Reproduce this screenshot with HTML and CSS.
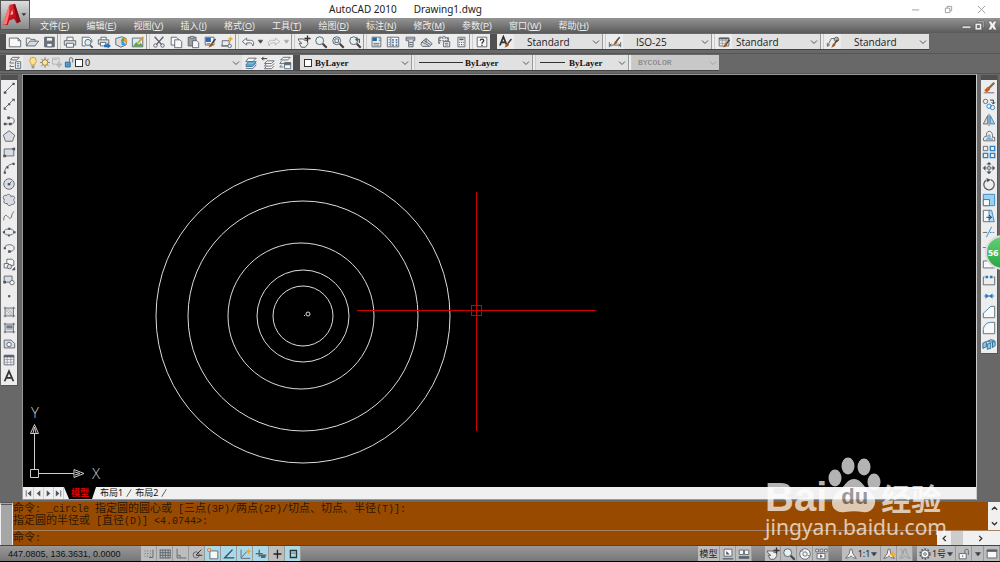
FILE: index.html
```html
<!DOCTYPE html>
<html lang="zh-CN">
<head>
<meta charset="utf-8">
<title>AutoCAD 2010 Drawing1.dwg</title>
<link rel="stylesheet" href="styles.css">
</head>
<body>
<svg class="defs" aria-hidden="true">
  <defs>
    <linearGradient id="red" x1="0" y1="0" x2="1" y2="1"><stop offset="0" stop-color="#f04a4a"/><stop offset=".5" stop-color="#cf1420"/><stop offset="1" stop-color="#7c0a10"/></linearGradient>
    <symbol id="chev" viewBox="0 0 8 8"><path d="M1 2.500 4 5.500 7 2.500" fill="none" stroke="#555"/></symbol>
    <symbol id="tri" viewBox="0 0 8 8"><path d="M1.500 2.500h5L4 6z" fill="#333"/></symbol>
    <symbol id="brush" viewBox="0 0 16 16"><path d="M14 3 9.500 8.500" stroke="#3c4048" stroke-width="2" fill="none"/><path d="M10.500 8c1 2 0 5-6 6 2-1 1.500-5 4-6z" fill="#a55a22" stroke="none"/></symbol>
    <symbol id="mag" viewBox="0 0 16 16"><circle cx="6.500" cy="6.500" r="4.500" fill="#e4f0f2" stroke="#4c5a5e"/><path d="M10 10l4.500 4.500" stroke="#444" stroke-width="2.500"/></symbol>
    <symbol id="hand" viewBox="0 0 16 16"><path d="M1.500 4.500h6l1 1.500h3l1 4-3 4H5L2.500 9.500h3L2 6.500z" fill="#eee" stroke="#555"/><path d="M12 .5v7M8.500 4h7" stroke="#333" stroke-width="1.500"/></symbol>
  </defs>
</svg>

<header class="top">
  <div class="title">
    <span class="name">AutoCAD 2010</span><span class="doc">Drawing1.dwg</span>
    <div class="win">
      <button aria-label="最小化"><svg viewBox="0 0 10 10"><path d="M1 5.500h8"/></svg></button>
      <button aria-label="还原"><svg viewBox="0 0 10 10"><path d="M1.500 3.500h5v5h-5zM3.500 3.500v-2h5v5h-2"/></svg></button>
      <button aria-label="关闭"><svg viewBox="0 0 10 10"><path d="M1 1l8 8M9 1 1 9"/></svg></button>
    </div>
  </div>
  <nav class="menu">
    <button>文件(<u>F</u>)</button><button>编辑(<u>E</u>)</button><button>视图(<u>V</u>)</button><button>插入(<u>I</u>)</button><button>格式(<u>O</u>)</button><button>工具(<u>T</u>)</button><button>绘图(<u>D</u>)</button><button>标注(<u>N</u>)</button><button>修改(<u>M</u>)</button><button>参数(<u>P</u>)</button><button>窗口(<u>W</u>)</button><button>帮助(<u>H</u>)</button>
    <div class="mdi">
      <button aria-label="最小化图形"><svg viewBox="0 0 10 10"><path d="M1 5.500h8v2H1z"/></svg></button>
      <button aria-label="还原图形"><svg viewBox="0 0 10 10"><path d="M3 1h6v6H8V2H3zM1 3h6v6H1zm2 2v2h2V5z" fill-rule="evenodd"/></svg></button>
      <button aria-label="关闭图形"><svg viewBox="0 0 10 10"><path d="M1 1h3l1 2 1-2h3L7 5l2 4H6L5 7 4 9H1l2-4z"/></svg></button>
    </div>
  </nav>
  <button class="app" aria-label="应用程序菜单">
    <svg viewBox="0 0 30 30"><path d="M2 25 9 4l6-1 6 19-4 2-3-5-5 2-2 5z" fill="url(#red)"/><path d="M10 15l3-1-1-5z" fill="#f2c0c0"/><path d="M2 25 9 4v9L6 25z" fill="#ff7670"/><path d="M15 3l6 19-3 1-5-19z" fill="#8b0c14"/><path d="M22 13h5l-2.500 3z" fill="#333"/></svg>
  </button>
</header>

<div class="row">
  <div class="bar">
    <button aria-label="新建"><svg viewBox="0 0 16 16"><path d="M1.500 3.500h10l3 3v7h-13z" class="w"/><path d="M11.500 3.500v3h3"/></svg></button>
    <button aria-label="打开"><svg viewBox="0 0 16 16"><path d="M1.500 12.500v-9h4l1 1.500h5v2"/><path d="M1.500 12.500l4-5.500h10l-4 5.500z" class="g"/></svg></button>
    <button aria-label="保存"><svg viewBox="0 0 16 16"><path d="M3 2.500h11v11H3z" fill="#69727e"/><path d="M5 3h7v4H5zM5.500 9.500h6v4h-6z" class="w"/></svg></button>
    <i class="sep"></i>
    <button aria-label="打印"><svg viewBox="0 0 16 16"><path d="M4.500 6V2.500h7V6" class="w"/><path d="M1.500 6.500h13v5h-13z" class="g"/><path d="M4 9.500h8v4.500H4z" class="w"/></svg></button>
    <button aria-label="打印预览"><svg viewBox="0 0 16 16"><path d="M2.500 12.500v-10h8l3 3v3M2.500 12.500h4" class="w"/><circle cx="9" cy="8.500" r="3.500" fill="#d6edf3"/><path d="M11.500 11.500l3 3" stroke-width="2"/></svg></button>
    <button aria-label="发布"><svg viewBox="0 0 16 16"><path d="M4.500 5V2.500h6V5" class="w"/><path d="M1.500 5.500h12v5h-12z" class="g"/><path d="M4 8.500h6v4H4z" class="w"/><path d="M8 11h4V9l4 3.500-4 3V14H8z" fill="#1e72c4" stroke="none"/></svg></button>
    <button aria-label="三维DWF"><svg viewBox="0 0 16 16"><path d="M2 4l7-2 5 2v7l-6 3-6-3z" class="g"/><path d="M8 7a4 4 0 0 1 4-4v4z" fill="#50a84a" stroke="none"/><path d="M12 3a4 4 0 0 1 2.500 6L11 7z" fill="#f29d34" stroke="none"/><path d="M8 7h3l2 4-4 1z" fill="#4098dd" stroke="none"/></svg></button>
    <button aria-label="渲染"><svg viewBox="0 0 16 16"><path d="M1.500 3.500h12v10h-12z" fill="#d7ebf7"/><path d="M2 13l4-5 3 3 2-2 2.500 3v1z" fill="#63a24c" stroke="none"/><path d="M8 9l6-7" stroke="#d99b2b" stroke-width="2"/></svg></button>
    <i class="sep"></i>
    <button aria-label="剪切"><svg viewBox="0 0 16 16"><path d="M3 2l8 9M13 2l-8 9" stroke-width="1.500"/><circle cx="4" cy="12" r="2"/><circle cx="12" cy="12" r="2"/></svg></button>
    <button aria-label="复制"><svg viewBox="0 0 16 16"><path d="M2.500 11.500v-9h6l2 2v7z" class="w"/><path d="M6.500 14.500v-9h6l2 2v7z" class="w"/></svg></button>
    <button aria-label="粘贴"><svg viewBox="0 0 16 16"><path d="M2.500 2.500h9v10h-9z" fill="#9b9b98"/><path d="M5 1.500h4v2H5z" class="w"/><path d="M7.500 14.500v-8h5l2 2v6z" class="w"/></svg></button>
    <button aria-label="特性匹配"><svg viewBox="0 0 16 16"><path d="M2.500 2.500h10v9h-10z" class="w"/><path d="M3 3h6v5H3z" fill="#2c6bb0" stroke="none"/><path d="M4 10h4"/><use href="#brush" x="2" y="2" width="14" height="14"/></svg></button>
    <button aria-label="块编辑器"><svg viewBox="0 0 16 16"><path d="M2.500 12.500v-6h8v6zM1 12.500h12"/><circle cx="11" cy="12.500" r="2" class="w"/><path d="M12 1l1 2.500 2.500 1L13 5.500 12 8l-1-2.500L8.500 4.500l2.500-1z" fill="#efa632" stroke="none"/></svg></button>
    <i class="sep"></i>
    <button aria-label="放弃"><svg viewBox="0 0 16 16"><path d="M1.500 7.500l5-4V6h4c4 0 5 3 3 6.500C13 10 12 9 10.500 9h-4v2.500z" class="w"/></svg></button><button class="dd" aria-label="放弃列表"><svg viewBox="0 0 8 8"><use href="#tri"/></svg></button>
    <button aria-label="重做"><svg viewBox="0 0 16 16" class="off"><path d="M14.500 7.500l-5-4V6h-4c-4 0-5 3-3 6.500C3 10 4 9 5.500 9h4v2.500z"/></svg></button><button class="dd off" aria-label="重做列表"><svg viewBox="0 0 8 8"><use href="#tri"/></svg></button>
    <i class="sep"></i>
    <button aria-label="平移"><svg viewBox="0 0 16 16"><use href="#hand"/></svg></button>
    <button aria-label="缩放"><svg viewBox="0 0 16 16"><use href="#mag"/></svg></button>
    <button aria-label="窗口缩放"><svg viewBox="0 0 16 16"><use href="#mag"/><path d="M4.500 4.500h4v4h-4z"/></svg></button>
    <button aria-label="上一个缩放"><svg viewBox="0 0 16 16"><use href="#mag"/><path d="M13 9V5H9M11 3L9 5l2 2" stroke-width="1.500"/></svg></button>
    <i class="sep"></i>
    <button aria-label="特性"><svg viewBox="0 0 16 16"><path d="M3.500 2.500h10v11h-10z" class="w"/><path d="M4 3h5v4H4z" fill="#2567a8" stroke="none"/><path d="M11 4.500h2M11 6.500h2M5 9.500h7M5 11.500h7"/></svg></button>
    <button aria-label="设计中心"><svg viewBox="0 0 16 16"><path d="M1.500 2.500h13v11h-13zM5.500 3v10" class="w"/><path d="M7 5.500h2M11 5.500h2M7 8.500h2M11 8.500h2M7 11.500h2M11 11.500h2" stroke="#477aa8" stroke-width="2"/><path d="M3 5.500h1.500M3 8.500h1.500M3 11h1.500"/></svg></button>
    <button aria-label="工具选项板"><svg viewBox="0 0 16 16"><path d="M3.500 2.500h10v4h-2v7h-5v-7h-3z" class="g"/><path d="M3.500 4.500h10M7 8.500h4M7 11h4"/></svg></button>
    <button aria-label="图纸集"><svg viewBox="0 0 16 16"><path d="M2 8l5-4 7 6-3 3H3l-2-2z" class="g"/><path d="M2 8l8 4M4 6l8 5M7 4v5"/></svg></button>
    <button aria-label="标记集"><svg viewBox="0 0 16 16"><path d="M3 10V3.500h9V7M3 6.500h9" stroke-dasharray="2 1"/><path d="M2 3c2-2 4 1 5-1s3 2 6 1v4M2 3v7"/><path d="M7.500 7.500h7v6h-7z" class="w"/><path d="M9 9.500h4M9 11.500h4"/></svg></button>
    <button aria-label="计算器"><svg viewBox="0 0 16 16"><path d="M4.500 2.500h8v11h-8z" class="w"/><path d="M6 5h5" stroke-width="2"/><path d="M6 8.500h1M8 8.500h1M10 8.500h1M6 11h1M8 11h1M10 11h1" stroke-width="1.500"/></svg></button>
    <i class="sep"></i>
    <button aria-label="帮助"><svg viewBox="0 0 16 16"><path d="M2.500 2.500h11v11h-11z" class="w"/><path d="M6 6.500C6 4 10 4 10 6.500c0 1.500-2 1-2 3.500M8 11v1.500" stroke="#333" stroke-width="1.500"/></svg></button>
  </div>
  <div class="bar grip">
    <button aria-label="文字样式"><svg viewBox="0 0 16 16"><path d="M1 12 5 2l4 10M3 8.500h4" stroke="#333" stroke-width="2"/><use href="#brush" x="2" y="2" width="14" height="14"/></svg></button>
    <label class="sel style"><select aria-label="文字样式"><option>Standard</option></select><svg><use href="#chev"/></svg></label>
    <i class="sep"></i>
    <button aria-label="标注样式"><svg viewBox="0 0 16 16"><path d="M1.500 8v6M14.500 8v6M2 11.500h12M4 10l-2 1.500L4 13M12 10l2 1.500-2 1.500"/><use href="#brush" x="2" y="0" width="13" height="13"/></svg></button>
    <label class="sel style"><select aria-label="标注样式"><option>ISO-25</option></select><svg><use href="#chev"/></svg></label>
    <i class="sep"></i>
    <button aria-label="表格样式"><svg viewBox="0 0 16 16"><path d="M2.500 3.500h11v9h-11z" class="w"/><path d="M2 6.500h12M2 9.500h12M6 4v9M10 4v9" stroke="#999"/><path d="M2.500 3.500h11v1h-11z" fill="#555"/><use href="#brush" x="3" y="3" width="13" height="13"/></svg></button>
    <label class="sel style near"><select aria-label="表格样式"><option>Standard</option></select><svg><use href="#chev"/></svg></label>
    <i class="sep"></i>
    <button aria-label="多重引线样式"><svg viewBox="0 0 16 16"><path d="M2 12 6 4h4M1.500 9v4l3-2"/><circle cx="12" cy="5" r="2.500" fill="#e9b16c"/><use href="#brush" x="2" y="3" width="13" height="13"/></svg></button>
    <label class="sel style"><select aria-label="多重引线样式"><option>Standard</option></select><svg><use href="#chev"/></svg></label>
  </div>
</div>

<div class="row second">
  <div class="bar">
    <button aria-label="图层特性"><svg viewBox="0 0 16 16"><path d="M5 1.500h8l-3 3H3zM3 6l-1 2h5M3 10l-1 2h5M3 14l-1 1.500h5" /><path d="M8.500 6.500h6v8h-6z" class="w"/><path d="M10 8.500h3M10 10.500h3M10 12.500h3" stroke="#3276b3"/></svg></button>
    <label class="sel layer"><select aria-label="图层"><option>0</option></select>
      <span class="lead">
        <svg viewBox="0 0 12 16"><path d="M4 11C4 9 2 8 2 5.500a4 4 0 0 1 8 0C10 8 8 9 8 11z" fill="#ffe18a" stroke="#b9953c"/><path d="M4 12.500h4M4.500 14.500h3"/></svg>
        <svg viewBox="0 0 12 16"><path d="M6 1.500v13M0 8h12M1.500 3.500l9 9M10.500 3.500l-9 9" stroke="#6d6b5e"/><circle cx="6" cy="8" r="3.500" fill="#ffe598" stroke="#8b7d45"/></svg>
        <svg viewBox="0 0 12 16" class="off"><path d="M5 10H.5V2.500h8V6M2 4.500h4"/><circle cx="8.500" cy="10.500" r="2.500"/><path d="M8.500 6.500v8M5 10.500h7"/></svg>
        <svg viewBox="0 0 12 16"><path d="M1.500 7.500h6v6h-6z" fill="#49a9dc" stroke="#26597a"/><path d="M6.500 7V3.500c0-2 4-2 4 0V8M4.500 9.500v2"/></svg>
        <i class="swatch"></i>
      </span><svg><use href="#chev"/></svg></label>
    <button aria-label="置为当前"><svg viewBox="0 0 16 16"><path d="M5 2.500h9l-4 4H2z" class="w"/><path d="M5 6.500h9l-4 4H2z" fill="#69bce9"/><path d="M2 14l8 .5 4-4.500"/><path d="M2 12h8l4-4" stroke="#2375b1"/></svg></button>
    <button aria-label="上一个图层"><svg viewBox="0 0 16 16"><path d="M1 3h6M3 1 1 3l2 2" stroke="#222"/><path d="M7 5.500h8l-3 3H4zM6 9l-2 2.500h8L15 8.500M6 12l-2 2.500h8l3-3" class="w"/></svg></button>
    <button aria-label="图层状态"><svg viewBox="0 0 16 16"><path d="M6 1.500h8l-3 3H3zM4 6 2 8.500h5M4 10l-2 2.500h4" class="w"/><path d="M7.500 7.500h7v7h-7z" class="w"/><path d="M8 8h6v2H8z" fill="#477fad"/></svg></button>
  </div>
  <div class="bar grip props">
    <label class="sel color"><select aria-label="颜色"><option>ByLayer</option></select><span class="lead"><i class="swatch"></i></span><svg><use href="#chev"/></svg></label>
    <i class="sep"></i>
    <label class="sel ltype"><select aria-label="线型"><option>ByLayer</option></select><span class="lead"><i class="line"></i></span><svg><use href="#chev"/></svg></label>
    <i class="sep"></i>
    <label class="sel lweight"><select aria-label="线宽"><option>ByLayer</option></select><span class="lead"><i class="line"></i></span><svg><use href="#chev"/></svg></label>
    <i class="sep"></i>
    <label class="sel plot"><select aria-label="打印样式" disabled><option>BYCOLOR</option></select><svg><use href="#chev"/></svg></label>
  </div>
</div>

<main class="work">
  <aside class="pal">
    <i class="cap"></i>
    <button aria-label="直线"><svg viewBox="0 0 16 16"><path d="M3 13 13 3"/><path d="M2 12h3v2.500H2zM12 2h2.500v2.500H12z" class="k"/></svg></button>
    <button aria-label="构造线"><svg viewBox="0 0 16 16"><path d="M3 13 13 3"/><path d="M2 11l3.500 3.500H2zM11 2h3.500v3.500zM7 7h2.500v2.500H7z" class="k"/></svg></button>
    <button aria-label="多段线"><svg viewBox="0 0 16 16"><path d="M3 12.500h8c4 0 4-7 0-7H7"/><path d="M2 11h3v3H2zM8 11h3v3H8zM6 4h3v3H6z" class="k"/></svg></button>
    <button aria-label="正多边形"><svg viewBox="0 0 16 16"><path d="M8 2l6.500 5-2.500 7H4L1.500 7z" class="g"/></svg></button>
    <button aria-label="矩形"><svg viewBox="0 0 16 16"><path d="M2.500 4.500h11v8h-11z" class="g"/><path d="M12 3h3v3h-3zM1.500 11h3v3h-3z" class="k"/></svg></button>
    <button aria-label="圆弧"><svg viewBox="0 0 16 16"><path d="M3 13c0-5 4-9 10-10"/><path d="M2 12h2.500v2.500H2zM5 6h2.500v2.500H5zM12 2h2.500v2.500H12z" class="k"/></svg></button>
    <button aria-label="圆"><svg viewBox="0 0 16 16"><circle cx="8" cy="8" r="6" class="g"/><path d="M8 8l3-3"/><path d="M6.500 7h3v2.500h-3z" class="k"/></svg></button>
    <button aria-label="修订云线"><svg viewBox="0 0 16 16"><path d="M3 8C0 6 2 1 5 3c1-2 5-2 5 1 4-2 6 2 3 4 3 2 1 6-2 5-1 2-5 2-5-1-4 1-5-3-3-4z" class="g"/></svg></button>
    <button aria-label="样条曲线"><svg viewBox="0 0 16 16"><path d="M2 13c0-5 2-7 4-5s4 5 5 0 2-4 3-5"/></svg></button>
    <button aria-label="椭圆"><svg viewBox="0 0 16 16"><ellipse cx="8" cy="8" rx="5.500" ry="3.500"/><path d="M7 3h2.500v2.500H7zM1 7h2.500v2.500H1zM13 7h2.500v2.500H13zM7 11h2v2H7z" class="k"/></svg></button>
    <button aria-label="椭圆弧"><svg viewBox="0 0 16 16"><path d="M3 8c0-5 11-5 11 0 0 3-3 4-5 4"/><path d="M2 7h2.500v2.500H2zM7 10.500h3v3H7z" class="k"/></svg></button>
    <button aria-label="插入块"><svg viewBox="0 0 16 16"><path d="M5.500 2.500h6l2 2v5h-8z" class="w"/><path d="M2.500 7.500h5v5h-5z" class="w"/><circle cx="8.500" cy="11" r="2.500" class="g"/><path d="M15 11v4h-4z" class="k"/></svg></button>
    <button aria-label="创建块"><svg viewBox="0 0 16 16"><path d="M2.500 3.500h9v7h-9z" class="g"/><path d="M1.500 9h3v3h-3z" class="k"/><circle cx="11.500" cy="11" r="2.500" class="w"/></svg></button>
    <button aria-label="点"><svg viewBox="0 0 16 16"><path d="M7 7h2.500v2.500H7z" class="k"/></svg></button>
    <button aria-label="图案填充"><svg viewBox="0 0 16 16"><path d="M3.500 2v12M13 2v12M2 3.500h13M2 12.500h13"/><path d="M4 6l3-3M4 9l6-6M4 12l9-9M7 12l6-6M10 12l3-3M6 4l7 7M4 5l8 8" stroke="#92979e" stroke-width=".6"/></svg></button>
    <button aria-label="渐变色"><svg viewBox="0 0 16 16"><path d="M4 4h9v8H4z" fill="#dde0e4" stroke="none"/><path d="M5 5h7v3H5z" fill="#737a84" stroke="none"/><path d="M5 8h7v2H5z" fill="#a9afb7" stroke="none"/><path d="M3.500 2v12M13 2v12M2 3.500h13M2 12.500h13"/></svg></button>
    <button aria-label="面域"><svg viewBox="0 0 16 16"><path d="M2.500 3.500h8l4 4v5h-12z" class="g"/><circle cx="8" cy="8.500" r="2.500" class="w"/></svg></button>
    <button aria-label="表格"><svg viewBox="0 0 16 16"><path d="M2.500 3.500h11v10h-11z" class="w"/><path d="M2 7.500h12M2 10.500h12M6 4v10M10 4v10" stroke="#959ba3"/><path d="M2.500 2.500h11v2h-11z" fill="#555e6a"/></svg></button>
    <button aria-label="多行文字"><svg viewBox="0 0 16 16"><path d="M3 14 8 2.500 13 14M5 10h6" stroke="#333" stroke-width="2"/></svg></button>
  </aside>

  <section class="view">
    <div class="canvas">
      <svg class="draw" role="img" aria-label="同心圆与十字光标">
        <g class="white"><circle cx="280" cy="241" r="147"/><circle cx="280" cy="241" r="115"/><circle cx="278" cy="241" r="73"/><circle cx="280" cy="241" r="46"/><circle cx="280" cy="241" r="30"/><circle cx="285" cy="239" r="2"/><path d="M281 240.500h1"/></g>
        <path class="cross" d="M334 235.500h239M453.500 117v239M448.500 230.500h10v10h-10z"/>
      </svg>
      <svg class="ucs" viewBox="0 0 84 84">
        <path d="M8.500 68V33M13 72.500h35M4.500 68.500h8v8h-8zM8.500 23.500l-4 9h8zM7 32l1.500-6 1.500 6M58 72.500l-10-4v8zM49 71l5 1.500-5 1.500"/>
        <text x="5" y="17">Y</text><text x="66" y="78">X</text>
      </svg>
    </div>
    <div class="tabs">
      <button class="nav" aria-label="第一个"><svg viewBox="0 0 10 10"><path d="M2.500 2v7"/><path d="M8 2v7L4 5.500z" class="k"/></svg></button><button class="nav" aria-label="上一个"><svg viewBox="0 0 10 10"><path d="M7 2v7L3 5.500z" class="k"/></svg></button><button class="nav" aria-label="下一个"><svg viewBox="0 0 10 10"><path d="M3 2v7l4-3.500z" class="k"/></svg></button><button class="nav" aria-label="最后一个"><svg viewBox="0 0 10 10"><path d="M2 2v7l4-3.500z" class="k"/><path d="M7.500 2v7"/></svg></button>
      <button class="tab on">模型</button><button class="tab">布局1</button><svg class="slash" viewBox="0 0 8 12"><path d="M1 11 7 1"/></svg><button class="tab">布局2</button><svg class="slash" viewBox="0 0 8 12"><path d="M1 11 7 1"/></svg>
    </div>
  </section>

  <aside class="pal">
    <i class="cap"></i>
    <button aria-label="删除"><svg viewBox="0 0 16 16"><path d="M2 13.500h12"/><path d="M14 2 7 9" stroke="#8b6a44" stroke-width="2.500"/><path d="M8 8 4 12" stroke="#d8581c" stroke-width="4"/></svg></button>
    <button aria-label="复制对象"><svg viewBox="0 0 16 16"><circle cx="4" cy="5" r="2.500"/><path d="M9 3.500h4v4M11 6l2 2 2-2" stroke="#222"/><g class="b"><circle cx="8" cy="10.500" r="2.500"/><circle cx="12" cy="12" r="2.500"/></g></svg></button>
    <button aria-label="镜像"><svg viewBox="0 0 16 16"><path d="M6.500 3v9.500h-5z" class="g"/><path d="M8 1v14"/><path d="M9.500 3v9.500h5z" class="b" fill="#a8d3ef"/></svg></button>
    <button aria-label="偏移"><svg viewBox="0 0 16 16"><path d="M2 13.500h12.500v-4H12c1-9-8-9-7-1-3 0-4 2-3 5z"/><path d="M4.500 11.500h8M7 11c-1-6 3-6 2 0" class="b"/></svg></button>
    <button aria-label="阵列"><svg viewBox="0 0 16 16"><path d="M1.500 1.500h5v5h-5z"/><path d="M9.500 1.500h5v5h-5zM1.500 9.500h5v5h-5zM9.500 9.500h5v5h-5z" class="b" stroke-width="1.500"/></svg></button>
    <button aria-label="移动"><svg viewBox="0 0 16 16"><path d="M8 1l3 3H5zM8 15l3-3H5zM1 8l3-3v6zM15 8l-3-3v6z" class="k"/><path d="M8 3v3M8 10v3M3 8h3M10 8h3M6.500 6.500h3v3h-3z"/></svg></button>
    <button aria-label="旋转"><svg viewBox="0 0 16 16"><path d="M5 3.500a6 6 0 1 0 5-.5" stroke-width="1.500"/><path d="M5 1l5 2-4 3z" class="k"/></svg></button>
    <button aria-label="缩放对象"><svg viewBox="0 0 16 16"><path d="M1.500 1.500h13v13h-13z" class="b" fill="#9bd0ee"/><path d="M1.500 7.500h7v7h-7z" class="w"/></svg></button>
    <button aria-label="拉伸"><svg viewBox="0 0 16 16"><path d="M9 1.500H1.500v13H9" class="w"/><path d="M8 1.500h3l3 13H8z" class="b" fill="#b4dcf3"/><path d="M5 9.500h5M8 7l3 2.500L8 12" stroke="#222"/></svg></button>
    <button aria-label="修剪"><svg viewBox="0 0 16 16"><path d="M1 8.500h5"/><path d="M5 14 11 2M9 8.500h2M12 8.500h2" class="b"/></svg></button>
    <button aria-label="延伸"><svg viewBox="0 0 16 16"><path d="M1 7.500h5"/><path d="M8 7.500h6" class="b"/></svg></button>
    <button aria-label="打断于点"><svg viewBox="0 0 16 16"><path d="M1.500 4.500h13v8h-13z" class="w"/></svg></button>
    <button aria-label="打断"><svg viewBox="0 0 16 16"><path d="M3 4.500H1.500v9h13v-9H13" /><path d="M4 3h3v3H4zM9 3h3v3H9z" fill="#2778bd" stroke="none"/></svg></button>
    <button aria-label="合并"><svg viewBox="0 0 16 16"><path d="M2 8h12" class="b"/><path d="M4 5l4 3-4 3zM12 5 8 8l4 3z" fill="#2778bd" stroke="none"/></svg></button>
    <button aria-label="倒角"><svg viewBox="0 0 16 16"><path d="M1.500 9v5.500h13v-13H10" class="w"/><path d="M1.500 9.500 10 1.500" class="b"/></svg></button>
    <button aria-label="圆角"><svg viewBox="0 0 16 16"><path d="M1.500 10v4.500h13v-13H10" class="w"/><path d="M1.500 10c0-4 3-8.500 8.500-8.500" class="b"/></svg></button>
    <button aria-label="分解"><svg viewBox="0 0 16 16"><path d="M1 7l4-2v6l-4 2zM6 5l4-2 4 1-3 2zM12 6l3-1v5l-3 2zM6 8l4-1v6l-4 1z" fill="#8cc8e8" stroke="#28668d"/></svg></button>
  </aside>
  <button class="badge">56</button>
</main>

<section class="cmd">
  <i class="handle"></i>
  <div class="lines">
    <div class="hist">
      <p>命令<span>: _circle </span>指定圆的圆心或<span> [</span>三点<span>(3P)/</span>两点<span>(2P)/</span>切点、切点、半径<span>(T)]:</span></p>
      <p>指定圆的半径或<span> [</span>直径<span>(D)] &lt;4.0744&gt;:</span></p>
      <div class="vs"><button aria-label="向上滚动"><svg viewBox="0 0 8 8"><path d="M1 5.500 4 2.500l3 3"/></svg></button><button aria-label="向下滚动"><svg viewBox="0 0 8 8"><path d="M1 2.500 4 5.500l3-3"/></svg></button></div>
    </div>
    <div class="prompt"><label for="c">命令<span>:</span></label><input id="c"><div class="hs"><button aria-label="向左滚动"><svg viewBox="0 0 8 8"><path d="M5.500 1 2.500 4l3 3"/></svg></button><i></i><button aria-label="向右滚动"><svg viewBox="0 0 8 8"><path d="M2.500 1 5.500 4l-3 3"/></svg></button></div></div>
  </div>
  <div class="mark" aria-hidden="true">
    <div class="brand"><b>Bai</b><span class="paw"><svg viewBox="0 0 54 56"><ellipse cx="8" cy="21" rx="6.500" ry="8.500"/><ellipse cx="21" cy="9" rx="6.500" ry="8.500"/><ellipse cx="37" cy="10" rx="6.500" ry="8.500"/><ellipse cx="47" cy="25" rx="6.500" ry="8.500"/><path d="M27 22c6 0 9 6 13 10s9 7 8 14-7 10-12 9c-6-1-12-1-18 0C12 56 5 53 5 46s5-10 9-14 7-10 13-10z"/></svg><em>du</em></span><b class="cn">经验</b></div>
    <div class="url">jingyan.baidu.com</div>
  </div>
</section>

<footer class="status">
  <output>447.0805, 136.3631, 0.0000</output>
  <div class="set">
    <button aria-label="捕捉"><svg viewBox="0 0 16 16"><path d="M3 4.500h8M3 7.500h8M3 10.500h8" stroke-dasharray="1 2"/><path d="M12.500 3v9H8"/></svg></button>
    <button aria-label="栅格"><svg viewBox="0 0 16 16"><path d="M2 3.500h12M2 6.500h12M2 9.500h12M2 12.500h12M2.500 3v10M5.500 3v10M8.500 3v10M11.500 3v10M14 3v10"/></svg></button>
    <button aria-label="正交"><svg viewBox="0 0 16 16"><path d="M3.500 2v10.500H14M4 9.500h3v3"/></svg></button>
    <button aria-label="极轴"><svg viewBox="0 0 16 16"><circle cx="7" cy="9" r="3.500"/><path d="M7 9l6-6M7 9.500h7" stroke="#222"/></svg></button>
    <button class="on" aria-label="对象捕捉"><svg viewBox="0 0 16 16"><path d="M4.500 4.500h9v9h-9z" class="w"/><path d="M2 2h3v3H2z" fill="#eee" stroke="#d87532"/></svg></button>
    <button class="on" aria-label="对象追踪"><svg viewBox="0 0 16 16"><path d="M12 3 3 12.500h11" stroke="#285066" stroke-width="1.500"/></svg></button>
    <button class="on" aria-label="动态UCS"><svg viewBox="0 0 16 16"><path d="M3.500 3v10H14M4 12l7-8"/><path d="M12 1l1 3 3 1-3 1-1 3-1-3-3-1 3-1z" fill="#f4aa25" stroke="none"/></svg></button>
    <button class="on" aria-label="动态输入"><svg viewBox="0 0 16 16"><path d="M6 3v8M2 7.500h8" stroke-width="1.500"/><path d="M7 9.500h7M8 11.500h5" stroke-width="2"/></svg></button>
    <button aria-label="线宽"><svg viewBox="0 0 16 16"><path d="M8.500 3v10M4 8h9" stroke="#222" stroke-width="1.500"/></svg></button>
    <button class="on" aria-label="快捷特性"><svg viewBox="0 0 16 16"><path d="M5 4h7v8H5z" fill="none" stroke="#333" stroke-width="1.500"/><path d="M6 7h5"/></svg></button>
  </div>
  <div class="set right"><button class="txt">模型</button>
    <button aria-label="布局"><svg viewBox="0 0 16 16"><path d="M3.500 2.500h9v8h-9z" class="w"/><path d="M6 4.500v4h4z" class="k"/><path d="M2 13.500h12" stroke-width="1.500"/></svg></button>
    <button aria-label="快速查看"><svg viewBox="0 0 16 16"><path d="M2.500 3.500h5v5h-5zM8.500 3.500h5v5h-5z" class="w"/><path d="M2 12h12" stroke-width="3"/></svg></button></div>
  <div class="set">
    <button aria-label="平移视图"><svg viewBox="0 0 16 16"><use href="#hand"/></svg></button>
    <button aria-label="缩放视图"><svg viewBox="0 0 16 16"><use href="#mag"/></svg></button>
    <button aria-label="控制盘"><svg viewBox="0 0 16 16"><circle cx="8" cy="8" r="6" class="w"/><circle cx="8" cy="8" r="2.500"/><path d="M3 4.500h3M11 10h2"/></svg></button>
    <button aria-label="运动"><svg viewBox="0 0 16 16"><path d="M2 2.500h3v3H2zM7 2.500h3v3H7zM12 2.500h3v3h-3zM3.500 7.500h9v6h-9z" class="w"/><path d="M7 8.500v4l3-2z" class="k"/></svg></button></div>
  <div class="set">
    <button class="scale"><svg viewBox="0 0 16 16"><path d="M7 2.500h2l1 5 4 5.500-4-1-2-2-2 2-4 1 4-5.500z" class="w"/></svg>1:1<svg class="t" viewBox="0 0 8 8"><use href="#tri"/></svg></button>
    <button aria-label="注释可见性"><svg viewBox="0 0 16 16"><path d="M7 2.500h2l1 5 4 5.500-4-1-2-2-2 2-4 1 4-5.500z" class="w"/><path d="M12 5l1 2.500 3 1-3 1-1 3-1-3-3-1 3-1z" fill="#f4aa25" stroke="none"/></svg></button>
    <button aria-label="自动缩放"><svg viewBox="0 0 16 16" class="off"><path d="M7 2.500h2l1 5 4 5.500-4-1-2-2-2 2-4 1 4-5.500zM3 2l3 4-2 1"/></svg></button></div>
  <div class="set">
    <button class="scale"><svg viewBox="0 0 16 16"><circle cx="8" cy="8" r="5.500" stroke-dasharray="2 1.500" stroke-width="2"/><circle cx="8" cy="8" r="4.500" class="w"/><circle cx="8" cy="8" r="1.500"/></svg>1号<svg class="t" viewBox="0 0 8 8"><use href="#tri"/></svg></button>
    <button aria-label="锁定"><svg viewBox="0 0 16 16"><path d="M2.500 7.500h8v6h-8z" class="w"/><path d="M9 7V4c0-2 4-2 4 0v5M6.500 9.500v2"/></svg></button>
    <button class="dd" aria-label="状态栏菜单"><svg viewBox="0 0 8 8"><use href="#tri"/></svg></button>
    <button aria-label="全屏显示"><svg viewBox="0 0 16 16"><path d="M2.500 3.500h11v9h-11z" class="w"/><path d="M2.500 3.500h11v1.500h-11z" fill="#555"/></svg></button></div>
</footer>
</body>
</html>
```
FILE: styles.css
```css
* { box-sizing: border-box; }
body {
  margin: 0;
  min-height: 100vh;
  display: flex;
  flex-direction: column;
  overflow: hidden;
  background: #686868;
  font: 9px/12px "Noto Sans", "Noto Sans CJK SC", sans-serif;
  color: #222;
}
button {
  margin: 0;
  padding: 0;
  border: 0;
  background: none;
  color: inherit;
  font: inherit;
  display: flex;
  align-items: center;
  justify-content: center;
  flex: none;
}
svg { display: block; fill: none; stroke: #59616b; flex: none; }
.defs { position: absolute; width: 0; height: 0; }
.w { fill: #f8f8f8; }
.g { fill: #d9dde2; }
.k { fill: #4c535c; stroke: none; }
.b { stroke: #2f83c4; }
.off { opacity: .4; }
i { display: block; flex: none; }

/* title and menu */
.top { position: relative; }
.title {
  height: 18px;
  background: #fff;
  display: flex;
  align-items: center;
  padding-left: 329px;
  font: 10px/12px "Noto Sans", sans-serif;
}
.name { margin-right: 17px; }
.win { display: flex; margin-left: auto; margin-right: 2px; }
.win button { width: 33px; height: 16px; }
.win svg { width: 9px; height: 9px; stroke: #999; }
.menu {
  height: 15px;
  display: flex;
  gap: 17px;
  padding-left: 40px;
  background: linear-gradient(#949494, #5a5a5a);
  color: #eee;
  font-family: "Liberation Sans", "Noto Sans CJK SC", sans-serif;
}
.menu u { text-underline-offset: 1px; }
.mdi { display: flex; gap: 2px; margin: 0 2px 0 auto; align-items: center; }
.mdi svg { width: 11px; height: 11px; fill: #f2f2f2; stroke: #444; stroke-width: .5; }
.app {
  position: absolute;
  left: 0;
  top: 0;
  width: 30px;
  height: 30px;
  background: linear-gradient(#ddd, #888);
  border: 1px solid #555;
}
.app svg { width: 28px; height: 28px; stroke: none; }

/* toolbars */
.row { display: flex; margin-top: 1px; padding-bottom: 3px; border-bottom: 1px solid #555; }
.row.second { padding-bottom: 2px; }
.bar {
  height: 16px;
  display: flex;
  align-items: center;
  background: #ececec;
  border-left: 6px solid #505050;
  border-bottom: 1px solid #444;
}
.bar.grip { border-left-width: 7px; }
.bar > button { width: 17px; height: 15px; }
.bar > button svg { width: 14px; height: 14px; }
.bar > .dd { width: 9px; }
.bar > .dd svg { width: 7px; height: 7px; }
.sep { width: 4px; height: 15px; border-left: 1px solid #999; border-right: 1px solid #ccc; }
.sel { position: relative; height: 15px; background: #e1e1e1; flex: none; }
.sel > svg { position: absolute; right: 2px; top: 4px; width: 8px; height: 8px; pointer-events: none; }
.sel select {
  appearance: none;
  width: 100%;
  height: 15px;
  border: 0;
  border-radius: 0;
  background: none;
  padding: 0 12px 0 13px;
  font: inherit;
  color: #222;
}
.style { width: 88px; font: 10px/12px "Open Sans", sans-serif; }
.near select { padding-left: 4px; }
.lead {
  position: absolute;
  inset: 0 auto 0 4px;
  display: flex;
  align-items: center;
  pointer-events: none;
}
.lead svg { width: 12px; height: 13px; }
.swatch { width: 8px; height: 8px; border: 1px solid #333; background: #fff; }
.line { width: 44px; height: 1px; background: #333; }
.layer { width: 219px; }
.layer select { padding-left: 62px; }
.props { font: 700 9px/12px "Liberation Serif", serif; }
.props .sel select { color: #111; }
.props .color { width: 111px; }
.props .color select { padding-left: 15px; }
.ltype { width: 117px; }
.ltype select { padding-left: 50px; }
.lweight { width: 92px; }
.lweight select { padding-left: 33px; }
.lweight .line { width: 25px; }
.plot { width: 87px; background: #c8c8c8; font: 8px/12px "Liberation Mono", monospace; }
.props .plot select { padding-left: 6px; color: #777; opacity: 1; }
.plot > svg { opacity: .3; }

/* work area */
.work { flex: 1; display: flex; align-items: flex-start; position: relative; gap: 4px; padding: 0 2px 0 1px; }
.pal { background: #ededed; width: 17px; padding-bottom: 1px; border: solid #555; border-width: 0 1px 1px 0; margin-top: 1px; }
.cap { height: 5px; background: #505050; }
.pal button { width: 16px; height: 16px; }
.pal svg { width: 14px; height: 14px; }
.view {
  flex: 1;
  align-self: stretch;
  display: flex;
  flex-direction: column;
  border: 1px solid #999;
  border-right: 1px solid #ccc;
}
.canvas { flex: 1; min-height: 200px; background: #000; position: relative; overflow: hidden; }
.draw { position: absolute; inset: 0; width: 100%; height: 100%; }
.white { stroke: #ddd; }
.cross { stroke: #d00000; shape-rendering: crispEdges; }
.ucs { position: absolute; left: 3px; bottom: 2px; width: 84px; height: 84px; stroke: #ccc; }
.ucs text { fill: #ccc; stroke: none; font: 300 15px/16px "Open Sans", sans-serif; }
.tabs { height: 12px; background: #f0f0f0; display: flex; padding-left: 1px; }
.nav { width: 10px; height: 12px; border-right: 1px solid #ccc; }
.nav svg { width: 9px; height: 10px; }
.tab { padding: 0 3px; color: #111; }
.tab.on {
  background: #000;
  color: #e00000;
  font-weight: 700;
  padding: 0 7px;
  margin-right: 1px;
  clip-path: polygon(0 0, 100% 0, calc(100% - 4px) 100%, 5px 100%);
}
.slash { width: 6px; height: 12px; stroke: #333; }
.badge {
  position: absolute;
  right: -20px;
  top: 161px;
  width: 35px;
  height: 35px;
  border: 2px solid #ddd;
  border-radius: 50%;
  background: linear-gradient(#62d174, #26a644);
  color: #fff;
  font-weight: 700;
  justify-content: flex-start;
  padding-left: 1px;
}

/* command window */
.cmd { display: flex; position: relative; margin-top: 2px; font-size: 11px; color: #2e1600; }
.cmd p { margin: 0; height: 12px; }
.cmd span { font: 10px/12px "Liberation Mono", monospace; white-space: pre; }
.handle { width: 13px; background: #a6a6a6; border: solid #eee; border-width: 1px 1px 0; border-top: 3px double #555; }
.lines { flex: 1; background: #984b00; }
.hist { position: relative; min-height: 29px; border-bottom: 1px solid #a98361; line-height: 12px; }
.prompt { height: 14px; display: flex; align-items: center; }
.prompt input { flex: 1; min-width: 0; border: 0; padding: 0; background: none; height: 12px; color: inherit; }
.vs { position: absolute; right: 0; top: 0; bottom: 0; width: 12px; background: #f0f0f0; display: flex; flex-direction: column; justify-content: space-between; }
.vs button { height: 13px; }
.vs svg, .hs svg { width: 7px; height: 7px; stroke: #333; stroke-width: 1.5; }
.hs { width: 63px; height: 14px; display: flex; background: #f0f0f0; }
.hs button { width: 14px; }
.hs i { width: 12px; background: #ccc; margin-right: 10px; }

/* watermark */
.mark { position: absolute; right: 53px; bottom: 4px; color: #fff; opacity: .7; pointer-events: none; }
.mark .brand { display: flex; align-items: flex-end; font: 700 40px/32px "Liberation Sans", sans-serif; }
.mark .paw { position: relative; width: 54px; height: 56px; }
.paw svg { width: 54px; height: 56px; fill: #fff; stroke: none; }
.cmd .paw em { position: absolute; left: 14px; bottom: 4px; font: 700 22px/24px "Liberation Sans", sans-serif; color: #777; }
.mark .cn { font: 700 30px/32px "Noto Sans CJK SC", sans-serif; }
.url { font: 21px/28px "Noto Sans", sans-serif; }

/* status bar */
.status {
  height: 17px;
  display: flex;
  align-items: center;
  background: linear-gradient(#989898, #777);
  border-top: 1px solid #444;
  border-bottom: 1px solid #000;
}
.status output { width: 141px; padding-left: 8px; font-family: "Liberation Sans", sans-serif; color: #111; }
.set { display: flex; margin-right: 4px; }
.set.right { margin-left: auto; margin-right: 13px; }
.set:nth-last-child(2) { margin-left: 9px; }
.set:last-child { margin-right: 0; }
.set button { width: 16px; height: 15px; background: #bdbdbd; border-right: 1px solid #999; }
.set svg { width: 14px; height: 14px; }
.set .on { background: #a9d9e9; }
.set .txt { width: 22px; }
.set .scale { width: 39px; }
.set .t, .set .dd svg { width: 8px; height: 8px; }
.set .dd { width: 12px; }
```
